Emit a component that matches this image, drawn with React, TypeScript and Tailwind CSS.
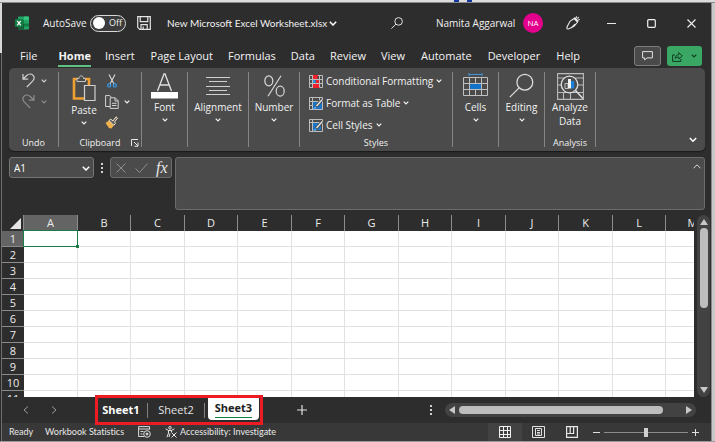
import React from "react";

const FONT = "font-['Open_Sans','Noto_Sans',sans-serif]";

function Chevron({ className = "" }: { className?: string }) {
  return (
    <svg width="6" height="4" viewBox="0 0 6 4" fill="none" stroke="currentColor" strokeWidth="1.2" className={className} aria-hidden="true">
      <path d="M0.7 0.6 3 2.9 5.3 0.6" />
    </svg>
  );
}

function ExcelLogo() {
  return (
    <svg width="14" height="14" viewBox="0 0 14 14" aria-label="Excel">
      <rect x="3" y="0.5" width="11" height="13" rx="1" fill="#21a366" />
      <path d="M3 4h6v3.5H3z" fill="#107c41" />
      <path d="M9 .5h4a1 1 0 0 1 1 1V4H9z" fill="#33c481" />
      <path d="M9 7.500h5v3H9z" fill="#107c41" />
      <path d="M3 7.500h6v6H4a1 1 0 0 1-1-1z" fill="#185c37" />
      <rect x="0" y="3" width="8" height="8" rx="0.8" fill="#107c41" />
      <path d="M2.200 4.800 5.800 9.300M5.800 4.800 2.200 9.300" stroke="#fff" strokeWidth="1.300" />
    </svg>
  );
}

function SaveIcon() {
  return (
    <svg width="14" height="14" viewBox="0 0 14 14" fill="none" stroke="#e4e4e4" strokeWidth="1.200">
      <path d="M.7.7h12.600v12.600H2.700l-2-2zM3.200.7v5h7.600v-5M4 13.300V8.700h6.200v4.600M6.200 10.500v2.800" />
    </svg>
  );
}

function SearchIcon({ size, weight }: { size: number; weight: number }) {
  return (
    <svg width={size} height={size} viewBox="0 0 24 24" fill="none" stroke="#dedede" strokeWidth={weight}>
      <circle cx="15.200" cy="8.800" r="7.600" />
      <path d="M9.700 14.300 0.800 23.200" />
    </svg>
  );
}

function PenIcon() {
  return (
    <svg width="14" height="14" viewBox="0 0 14 14" fill="none" stroke="#e8e8e8" strokeWidth="1.100">
      <path d="M8 2.500 11.500 6 8 10.300 2.500 13 1 12.800 1 11 4 5.300zM5.200 12 9 8.200M8.500 1.500 12.500 5.300M10.600.3l-.4 1.700M12.800 1.200l-1.400 1.300M13.800 3.500l-1.500.2" />
    </svg>
  );
}

function UndoIcon({ flip = false }: { flip?: boolean }) {
  return (
    <svg width="13" height="15" viewBox="0 0 13 15" fill="none" stroke="currentColor" strokeWidth="1.200" className={flip ? "-scale-x-100" : ""}>
      <path d="M1 1v5.200h5.200M1.200 6 4.700 2.500C7.200.2 10 .8 11.300 2.600c1.300 1.800.8 4-.7 5.500L4.800 14" />
    </svg>
  );
}

function PasteIcon() {
  return (
    <svg width="24" height="26" viewBox="0 0 24 26" fill="none">
      <path d="M2 4h15v19.500H2z" stroke="#f0a030" strokeWidth="2.600" />
      <path d="M5 6.500V3.500h2C7.300 1.600 8.100.8 9.300.8s2 .8 2.200 2.700h2v3z" fill="#4b4b4b" stroke="#c4c4c4" />
      <path d="M12.500 10.500h10.500v15H12.500z" fill="#4b4b4b" stroke="#d0d0d0" strokeWidth="1.200" />
    </svg>
  );
}

function CutIcon() {
  return (
    <svg width="10" height="14" viewBox="0 0 10 14" fill="none">
      <path d="M2 .5 7 10M8 .5 3 10" stroke="#dcdcdc" strokeWidth="1.100" />
      <circle cx="2.200" cy="11.400" r="1.600" stroke="#3a9be8" strokeWidth="1.200" />
      <circle cx="7.800" cy="11.400" r="1.600" stroke="#3a9be8" strokeWidth="1.200" />
    </svg>
  );
}

function CopyIcon() {
  return (
    <svg width="14" height="14" viewBox="0 0 14 14" fill="none" stroke="#d4d4d4">
      <path d="M5 11.500H.6V.6h4.200l1.700 1.800M5.200 2.800h5l3 3v7.600h-8zM10 3v3h3M7 8.300h4.500M7 10.500h4.500" />
    </svg>
  );
}

function PainterIcon() {
  return (
    <svg width="13" height="13" viewBox="0 0 13 13">
      <path d="M.5 7 4 4.500 8.800 9.200 6.500 12.600 4 12z" fill="#f2b04a" />
      <path d="M4 4.500 5.800 3.200 8 5 11 .8l1.500 1.200L9.600 6l.9 1.300-1.700 2z" fill="#5c5c5c" stroke="#f3e3c8" />
    </svg>
  );
}

function GridIcon({ kind }: { kind: "rules" | "table" | "cell" }) {
  return (
    <svg width="14" height="13" viewBox="0 0 14 13" fill="none">
      <path
        d={kind === "cell" ? "M.5.5h13v12H.5zM.5 3.500h13M3.500.5v12" : "M.5.5h13v12H.5zM.5 4.500h13M.5 8.500h13M3.500.5v12M10.500.5v12"}
        stroke="#bdbdbd"
      />
      {kind === "rules" ? (
        <>
          <path d="M4 1h4.500v3H4zM4 9h6v3H4z" fill="#f0202a" />
          <path d="M4 5h2.500v3H4z" fill="#2f8fe0" />
          <path d="M7 5h3v3H7z" fill="#f0202a" />
          <path d="M4 12.500h6.500M4 .5h5" stroke="#f0202a" />
        </>
      ) : (
        <>
          <path d={kind === "table" ? "M4 5h9v7H4z" : "M4 4h8v7H4z"} fill="#1c74c4" />
          <path d="M13.200 2.600 7 9.800" stroke="#4b4b4b" strokeWidth="3" />
          <path d="M13.200 2.600 7.500 9" stroke="#f0f0f0" strokeWidth="1.300" />
          <path d="M4.500 12.500c.2-2 1.200-3 3-2.500-.2 1.500-1.200 2.500-3 2.500z" fill="#53a7ee" />
        </>
      )}
    </svg>
  );
}

function CellsIcon() {
  return (
    <svg width="25" height="25" viewBox="0 0 25 25" fill="none">
      <path d="M6 1.500h13M6 0v3M19 0v3" stroke="#3d94dc" />
      <path d="M.5 4.500h24v18H.5zM.5 10.500h24M.5 16.500h24M6.500 4.500v18M18.500 4.500v18M12.500 4.500v6M12.500 16.500v6" stroke="#c0c0c0" />
      <path d="M7 11h11v5H7z" fill="#1272c8" />
    </svg>
  );
}

function AnalyzeIcon() {
  return (
    <svg width="27" height="27" viewBox="0 0 27 27" fill="none">
      <path d="M.6.600h25.800v25.800H.6zM.6 5h25.800M.6 12h5M21 12h5M.6 19.500h25.800M6.500 19.500v7M13.500 19.500v7" stroke="#bcbcbc" strokeWidth="1.100" />
      <circle cx="12.500" cy="11.500" r="8.300" fill="#4b4b4b" stroke="#dedede" strokeWidth="1.300" />
      <path d="M18.500 17.500 26 25.500" stroke="#dedede" strokeWidth="1.600" />
      <path d="M8 10.500h3v5H8z" stroke="#c0c0c0" />
      <path d="M11 6h3v9.500h-3z" fill="#f2f2f2" />
      <path d="M14 8h3.300v7.500H14z" fill="#1c80d8" />
    </svg>
  );
}

function Group({ label, width, children }: { label?: string; width: string; children: React.ReactNode }) {
  return (
    <section className={`relative flex shrink-0 flex-col justify-between border-r border-[#858585] ${width}`}>
      {children}
      {label && <div className="text-center text-[9px] leading-[9px]">{label}</div>}
    </section>
  );
}

function BigButton({ label, icon }: { label: string; icon: React.ReactNode }) {
  return (
    <button className="flex w-full flex-col items-center">
      <span className="flex h-[27px] items-center justify-center">{icon}</span>
      <span className="mt-[1px] text-[10px] leading-[14px]">{label}</span>
      <Chevron className="mt-[4px]" />
    </button>
  );
}

const MENU = [
  ["File", "ml-[18px]"],
  ["Home", "ml-[21px]"],
  ["Insert", "ml-[14px]"],
  ["Page Layout", "ml-[16px]"],
  ["Formulas", "ml-[15px]"],
  ["Data", "ml-[15px]"],
  ["Review", "ml-[15px]"],
  ["View", "ml-[15px]"],
  ["Automate", "ml-[16px]"],
  ["Developer", "ml-[16px]"],
  ["Help", "ml-[16px]"],
];

function TitleBar() {
  return (
    <header className="flex h-[40px] items-center text-[10px] text-[#f0f0f0]">
      <span className="ml-[13px]"><ExcelLogo /></span>
      <label htmlFor="autosave" className="ml-[14px] w-[47px]">AutoSave</label>
      <button id="autosave" role="switch" aria-checked="false" className="flex h-[17px] w-[36px] items-center rounded-full border border-[#d8d8d8] bg-[#3c3c3c] pl-[2px] text-[9px]">
        <span className="mr-[4px] h-[12px] w-[12px] rounded-full bg-white" />
        Off
      </button>
      <button aria-label="Save" className="ml-[11px]"><SaveIcon /></button>
      <button className="ml-[16px] flex w-[170px] items-center justify-between whitespace-nowrap font-['Lato','Open_Sans',sans-serif]">
        New Microsoft Excel Worksheet.xlsx
        <svg width="8" height="5" viewBox="0 0 8 5" fill="none" stroke="#fff" strokeWidth="1.500" className="shrink-0"><path d="M.8.8 4 4 7.200.8" /></svg>
      </button>
      <div className="flex flex-1 justify-center"><button aria-label="Search" className="ml-[20px]"><SearchIcon size={12} weight={2} /></button></div>
      <span className="w-[80px] whitespace-nowrap">Namita Aggarwal</span>
      <span className="ml-[7px] flex h-[20px] w-[20px] items-center justify-center rounded-full bg-[#e3008c] text-[8px] text-white">NA</span>
      <button aria-label="Draw" className="ml-[23px]"><PenIcon /></button>
      <button aria-label="Minimize" className="ml-[27px]"><svg width="9" height="9" stroke="#e8e8e8"><path d="M0 4.500h9" /></svg></button>
      <button aria-label="Maximize" className="ml-[31px]"><svg width="9" height="9" fill="none" stroke="#f0f0f0" strokeWidth="1.200"><rect x=".7" y=".7" width="7.600" height="7.600" rx="1" /></svg></button>
      <button aria-label="Close" className="ml-[31px] mr-[15px]"><svg width="9" height="9" stroke="#f0f0f0" strokeWidth="1.100"><path d="M.5.5l8 8M8.500.5l-8 8" /></svg></button>
    </header>
  );
}

function MenuBar() {
  return (
    <nav className="mt-px flex h-[24px] items-center whitespace-nowrap text-[11px] text-[#f4f4f4]">
      {MENU.map(([name, gap]) => (
        <button key={name} className={`h-[22px] ${gap} ${name === "Home" ? "border-b-2 border-[#5cc183] pt-[2px] font-bold" : ""}`}>{name}</button>
      ))}
      <span className="flex-1" />
      <button aria-label="Comments" className="flex h-[20px] w-[27px] items-center justify-center rounded-[3px] border border-[#7c7c7c] bg-[#4a4a4a]">
        <svg width="11" height="10" viewBox="0 0 11 10" fill="none" stroke="#e0e0e0"><path d="M.6.600h9.800v6.300H5L2.700 9V6.900H.6z" /></svg>
      </button>
      <button aria-label="Share" className="ml-[6px] mr-[9px] flex h-[20px] w-[35px] items-center justify-center gap-[8px] rounded-[3px] bg-[#3aa864] text-[#123b22]">
        <svg width="11" height="11" viewBox="0 0 11 11" fill="none" stroke="currentColor"><path d="M3 4H.6v6.400h8.300V8M3.200 7.500C3.500 5 4.700 3.800 6.800 3.800V1.500L10.300 5 6.800 8V6C5.300 5.900 4.200 6.300 3.200 7.500z" /></svg>
        <Chevron />
      </button>
    </nav>
  );
}

function Ribbon() {
  return (
    <div className="relative ml-[7px] mr-[6px] flex h-[83px] rounded-[5px] bg-[#4b4b4b] py-[4px] text-[#f2f2f2] shadow-[0_1px_1px_#1a1a1a]">
      <Group label="Undo" width="w-[50px]">
        <div className="flex flex-col gap-[6px] pl-[13px] pt-[1px]">
          <button aria-label="Undo" className="flex items-center gap-[6px] text-[#d0d0d0]"><UndoIcon /><Chevron /></button>
          <button aria-label="Redo" className="flex items-center gap-[6px] text-[#8c8c8c]"><UndoIcon flip /><Chevron /></button>
        </div>
      </Group>
      <Group label="Clipboard" width="w-[83px]">
        <div className="flex">
          <button className="ml-[9px] flex w-[32px] flex-col items-center">
            <span className="mt-[3px]"><PasteIcon /></span>
            <span className="mt-[2px] text-[10px] leading-[14px]">Paste</span>
            <Chevron className="mt-[4px]" />
          </button>
          <div className="ml-[5px] flex flex-col gap-[7px] pt-[2px]">
            <button aria-label="Cut" className="pl-[2px]"><CutIcon /></button>
            <button aria-label="Copy" className="flex items-center gap-[5px]"><CopyIcon /><Chevron /></button>
            <button aria-label="Format Painter"><PainterIcon /></button>
          </div>
        </div>
        <button aria-label="Clipboard settings" className="absolute bottom-[0px] right-[2px]">
          <svg width="8" height="8" viewBox="0 0 8 8" fill="none" stroke="#e8e8e8"><path d="M.5 7V.5H7M3 3l4 4M7 3.500V7.200H3.500" /></svg>
        </button>
      </Group>
      <Group width="w-[46px]">
        <BigButton label="Font" icon={
          <svg width="27" height="27" viewBox="0 0 27 27" fill="none"><path d="M6.500 19 13 2h1l6.500 17M9 13h9" stroke="#e0e0e0" strokeWidth="1.300" /><path d="M0 20h27v6.500H0z" fill="#fff" /></svg>
        } />
      </Group>
      <Group width="w-[61px]">
        <BigButton label="Alignment" icon={
          <svg width="24" height="20" viewBox="0 0 24 20" stroke="#cfcfcf"><path d="M0 1.500h24M3 5.500h18M0 10.500h24M3 14.500h18M0 18.500h24" /></svg>
        } />
      </Group>
      <Group width="w-[51px]">
        <BigButton label="Number" icon={
          <svg width="21" height="22" viewBox="0 0 21 22" fill="none" stroke="#dadada" strokeWidth="1.200"><ellipse cx="4.800" cy="5.800" rx="4" ry="5" /><ellipse cx="16.200" cy="16.200" rx="4" ry="5" /><path d="M17 .8 4 21.200" /></svg>
        } />
      </Group>
      <Group label="Styles" width="w-[153px]">
        <div className="flex flex-col items-start gap-[8px] whitespace-nowrap pl-[9px] pt-[2px] text-[10px] leading-[14px]">
          <button className="flex items-center gap-[3px]"><GridIcon kind="rules" />Conditional Formatting<Chevron /></button>
          <button className="flex items-center gap-[3px]"><GridIcon kind="table" />Format as Table<Chevron /></button>
          <button className="flex items-center gap-[3px]"><GridIcon kind="cell" />Cell Styles<Chevron /></button>
        </div>
      </Group>
      <Group width="w-[46px]"><BigButton label="Cells" icon={<CellsIcon />} /></Group>
      <Group width="w-[46px]"><BigButton label="Editing" icon={<SearchIcon size={25} weight={1.2} />} /></Group>
      <Group label="Analysis" width="w-[51px]">
        <button className="flex w-full flex-col items-center text-[10px] leading-[14px]">
          <span className="mt-[1px]"><AnalyzeIcon /></span>
          <span>Analyze</span>
          <span>Data</span>
        </button>
      </Group>
      <button aria-label="Ribbon options" className="ml-auto mr-[8px] self-end pb-[4px]">
        <svg width="8" height="6" viewBox="0 0 8 6" fill="none" stroke="#fff" strokeWidth="1.500"><path d="M.8 1 4 4.200 7.200 1" /></svg>
      </button>
    </div>
  );
}

function FormulaBar() {
  return (
    <div className="ml-[7px] mr-[6px] mt-[6px] flex items-start">
      <div className="relative w-[85px]">
        <input aria-label="Name box" defaultValue="A1" className="block h-[21px] w-full rounded-[3px] border border-[#757575] bg-[#4b4b4b] pl-[4px] text-[10px] text-white" />
        <svg width="8" height="5" viewBox="0 0 8 5" fill="none" stroke="#fff" strokeWidth="1.500" className="absolute right-[4px] top-[9px]"><path d="M.8.8 4 4 7.200.8" /></svg>
      </div>
      <span className="ml-[7px] flex h-[21px] flex-col justify-center gap-[2px]">
        <i className="h-[2px] w-[2px] bg-[#d0d0d0]" /><i className="h-[2px] w-[2px] bg-[#d0d0d0]" /><i className="h-[2px] w-[2px] bg-[#d0d0d0]" />
      </span>
      <div className="ml-[7px] flex h-[21px] w-[62px] items-center rounded-[3px] border border-[#6c6c6c] bg-[#4b4b4b] pl-[5px]">
        <button aria-label="Cancel"><svg width="10" height="10" stroke="#8e8e8e"><path d="M.5.5l9 9M9.500.5l-9 9" /></svg></button>
        <button aria-label="Enter" className="ml-[9px]"><svg width="13" height="10" fill="none" stroke="#8e8e8e"><path d="M.5 5.500 4.500 9.500 12.500.5" /></svg></button>
        <button aria-label="Insert function" className="ml-[8px] font-['Liberation_Serif',serif] text-[16px] italic leading-[18px] text-[#e8e8e8]">fx</button>
      </div>
      <div className="relative ml-[3px] flex-1">
        <textarea aria-label="Formula" className="block h-[53px] w-full resize-none rounded-[3px] border border-[#6c6c6c] bg-[#4b4b4b]" />
        <svg width="8" height="5" viewBox="0 0 8 5" fill="none" stroke="#d8d8d8" className="absolute right-[4px] top-[7px]"><path d="M.5 4.300 4 .8 7.500 4.300" /></svg>
      </div>
    </div>
  );
}

const COLS = "ABCDEFGHIJKLM".split("");
const ROWS = [1, 2, 3, 4, 5, 6, 7, 8, 9, 10, 11];

function Sheet() {
  return (
    <div className="mt-[5px] flex h-[182px]">
      <div className="min-w-0 flex-1 overflow-hidden">
        <table className="w-[718px] table-fixed border-separate border-spacing-0 text-[11px] leading-[14px]">
          <colgroup>
            <col className="w-[22px]" />
            {COLS.map((c, i) => <col key={c} className={i % 2 === 0 ? "w-[54px]" : "w-[53px]"} />)}
          </colgroup>
          <thead>
            <tr className="h-[16px]">
              <th className="border-r border-[#8c8c8c] p-0" aria-label="Select all">
                <svg width="11" height="11" viewBox="0 0 11 11" className="ml-auto mr-[2px]"><path d="M11 0v11H0z" fill="#e6e6e6" /></svg>
              </th>
              {COLS.map((c) => (
                <th key={c} scope="col" className={`border-r border-[#8c8c8c] p-0 font-normal text-[#ececec] ${c === "A" ? "bg-[#646464]" : ""}`}>{c}</th>
              ))}
            </tr>
          </thead>
          <tbody>
            {ROWS.map((r) => (
              <tr key={r} className="h-[16px]">
                <th scope="row" className={`border-b border-[#8c8c8c] p-0 font-normal text-[#ececec] ${r === 1 ? "bg-[#646464]" : ""}`}>{r}</th>
                {COLS.map((c) => (
                  <td key={c} className="border-b border-r border-[#e2e2e2] bg-white p-0">
                    {r === 1 && c === "A" && (
                      <div className="relative h-[15px]">
                        <span className="absolute -inset-px z-10 border border-[#1c7c48]">
                          <i className="absolute -bottom-[2px] -right-[2px] h-[3px] w-[3px] bg-[#1c7c48]" />
                        </span>
                      </div>
                    )}
                  </td>
                ))}
              </tr>
            ))}
          </tbody>
        </table>
      </div>
      <div className="ml-[3px] mr-[1px] flex w-[13px] flex-col items-center rounded-full bg-[#424242] py-[4px]">
        <svg width="8" height="6"><path d="M4 0 8 6H0z" fill="#c8c8c8" /></svg>
        <span className="mt-[3px] h-[80px] w-[8px] rounded-full bg-[#bdbdbd]" />
        <svg width="8" height="6" className="mt-auto"><path d="M0 0h8L4 6z" fill="#c8c8c8" /></svg>
      </div>
    </div>
  );
}

function SheetTabs() {
  return (
    <div className="flex h-[26px] items-center text-[11px] text-[#e4e4e4]">
      <button aria-label="Previous sheet" className="ml-[21px]"><svg width="6" height="8" fill="none" stroke="#9c9c9c"><path d="M5 .5 1 4l4 3.500" /></svg></button>
      <button aria-label="Next sheet" className="ml-[22px]"><svg width="6" height="8" fill="none" stroke="#9c9c9c"><path d="M1 .5 5 4 1 7.500" /></svg></button>
      <div className="relative ml-[38px] flex h-full w-[168px] items-start">
        <button className="flex h-full w-[52px] items-center justify-center font-bold text-white">Sheet1</button>
        <i className="mt-[6px] h-[15px] w-px bg-[#808080]" />
        <button className="flex h-full w-[56px] items-center justify-center">Sheet2</button>
        <i className="mt-[6px] h-[15px] w-px bg-[#808080]" />
        <button className="ml-[3px] flex h-[23px] w-[51px] items-center justify-center rounded-b-[4px] bg-white font-bold text-[#202020]">
          <span className="border-b border-[#107c41] leading-[18px]">Sheet3</span>
        </button>
        <span className="pointer-events-none absolute -inset-y-[2px] inset-x-0 border-[3px] border-[#ed1c24]" />
      </div>
      <button aria-label="New sheet" className="ml-[34px]"><svg width="10" height="10" stroke="#e0e0e0" strokeWidth="1.200"><path d="M5 0v10M0 5h10" /></svg></button>
      <span className="flex-1" />
      <span className="mr-[13px] flex flex-col gap-[2px]">
        <i className="h-[2px] w-[2px] bg-[#d0d0d0]" /><i className="h-[2px] w-[2px] bg-[#d0d0d0]" /><i className="h-[2px] w-[2px] bg-[#d0d0d0]" />
      </span>
      <div className="mr-[15px] flex h-[14px] w-[251px] items-center rounded-full bg-[#424242] px-[4px]">
        <svg width="6" height="8"><path d="M6 0v8L0 4z" fill="#c8c8c8" /></svg>
        <span className="ml-[4px] h-[8px] w-[204px] rounded-full bg-[#bdbdbd]" />
        <svg width="6" height="8" className="ml-auto"><path d="M0 0v8l6-4z" fill="#c8c8c8" /></svg>
      </div>
    </div>
  );
}

function StatusBar() {
  return (
    <footer className="flex h-[18px] items-center whitespace-nowrap bg-[#383838] font-['Lato','Open_Sans',sans-serif] text-[9px] text-[#e8e8e8] [font-variant-ligatures:none]">
      <span className="ml-[7px] w-[36px]">Ready</span>
      <button className="w-[93px] text-left">Workbook Statistics</button>
      <button aria-label="Record macro">
        <svg width="13" height="12" viewBox="0 0 13 12" fill="none" stroke="#dcdcdc"><path d="M6 10.500H.6V.600h11v3M.6 3h11M2.500 5.500h3M2.500 8h2" /><circle cx="9" cy="8" r="3.300" /><circle cx="9" cy="8" r="1" fill="#dcdcdc" /></svg>
      </button>
      <button className="ml-[14px] flex items-center gap-[3px]">
        <svg width="12" height="12" viewBox="0 0 12 12" fill="none" stroke="#e8e8e8"><circle cx="5" cy="1.800" r="1.300" /><path d="M.6 2.800 3.500 4.500v2.500L2 11.200M9.400 2.800 6.500 4.500V6M3.500 4.500h3M5 7.500 4 11M6.500 6.500l5 5M11.500 6.500l-5 5" /></svg>
        Accessibility: Investigate
      </button>
      <span className="flex-1" />
      <button aria-label="Normal view" className="flex h-full w-[34px] items-center justify-center bg-[#424242]">
        <svg width="12" height="12" fill="none" stroke="#f0f0f0"><path d="M.5.5h11v11H.5zM.5 4.500h11M.5 8.500h11M4.500.5v11M8.500.5v11" /></svg>
      </button>
      <button aria-label="Page layout view" className="ml-[10px]">
        <svg width="13" height="12" fill="none" stroke="#e0e0e0"><path d="M.5.500h12v11H.5zM3.500 2.500h6v7h-6zM5 4.500h3M5 6.500h3M5 8h3" /></svg>
      </button>
      <button aria-label="Page break view" className="ml-[21px]">
        <svg width="12" height="12" fill="none" stroke="#e8e8e8" strokeWidth="1.200"><path d="M.6.600h10.800v10.800H.6zM.6 7.500h7V.6M4.200.6v7" /></svg>
      </button>
      <button aria-label="Zoom out" className="ml-[15px]"><svg width="7" height="7" stroke="#e0e0e0"><path d="M0 3.500h7" /></svg></button>
      <input aria-label="Zoom" type="range" defaultValue="50" className="mx-[4px] h-[10px] w-[84px] appearance-none bg-transparent [&::-webkit-slider-runnable-track]:h-[1px] [&::-webkit-slider-runnable-track]:bg-[#8c8c8c] [&::-webkit-slider-thumb]:-mt-[4px] [&::-webkit-slider-thumb]:h-[9px] [&::-webkit-slider-thumb]:w-[4px] [&::-webkit-slider-thumb]:appearance-none [&::-webkit-slider-thumb]:bg-[#d0d0d0]" />
      <button aria-label="Zoom in" className="mr-[12px]"><svg width="7" height="7" stroke="#e0e0e0"><path d="M0 3.500h7M3.500 0v7" /></svg></button>
    </footer>
  );
}

export default function App() {
  return (
    <div className={`flex w-full flex-col bg-[#cfcfcf] ${FONT}`}>
      <div className="flex h-[3px] justify-end border-b border-[#8a8a8a] bg-[#dcdcdc] pr-[243px]">
        <i className="mr-[8px] h-[2px] w-[5px] bg-[#1238a0]" />
        <i className="h-[2px] w-[5px] bg-[#1238a0]" />
      </div>
      <div className="flex">
        <div className="flex w-[2px] flex-col">
          <i className="h-[50px] bg-[#d8d8d8]" />
          <i className="flex-1 border-r border-[#707070] bg-[#2a2a2a]" />
        </div>
        <main className="min-w-0 flex-1 bg-[#2d2d2d]">
          <TitleBar />
          <MenuBar />
          <Ribbon />
          <FormulaBar />
          <Sheet />
          <SheetTabs />
          <StatusBar />
        </main>
        <div className="w-[4px] border-l border-[#8a8a8a] bg-[#c8c8c8]" />
      </div>
      <div className="h-[1px] bg-[#9a9a9a]" />
    </div>
  );
}
